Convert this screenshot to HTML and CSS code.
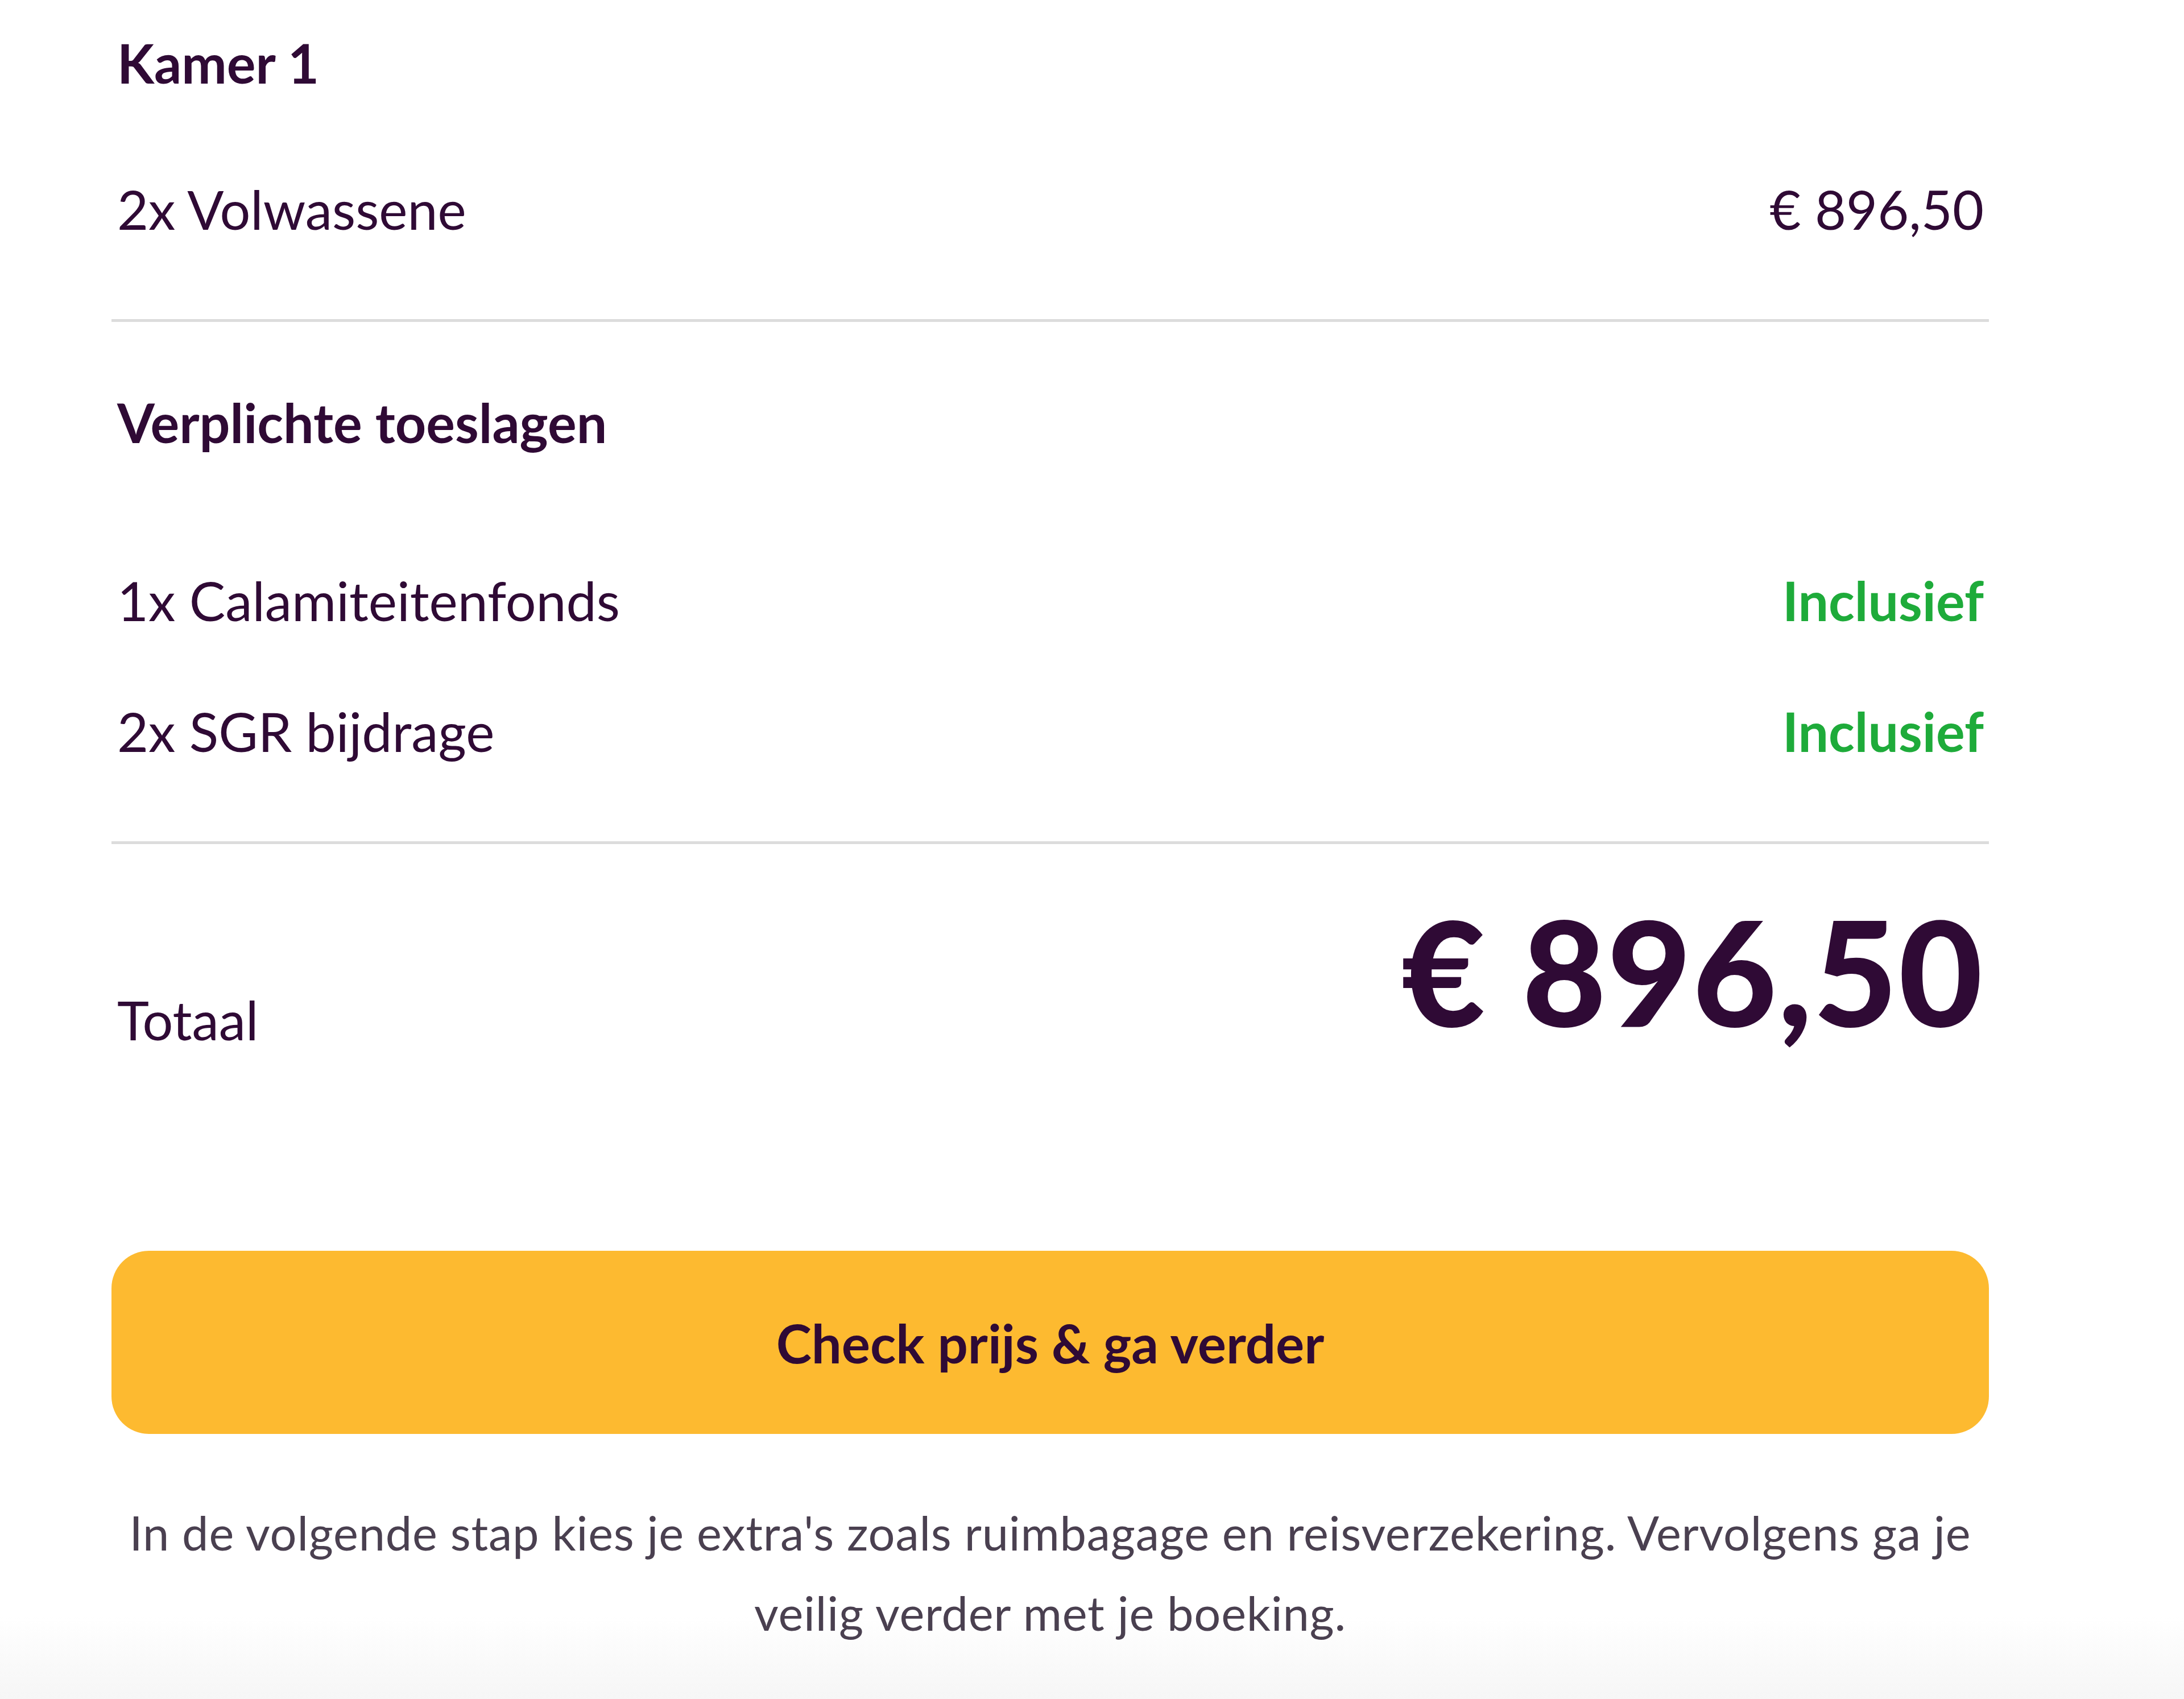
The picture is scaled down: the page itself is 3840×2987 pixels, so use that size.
FILE: index.html
```html
<!DOCTYPE html>
<html lang="nl">
<head>
<meta charset="utf-8">
<title>Prijsoverzicht</title>
<link rel="stylesheet" href="styles.css">
</head>
<body>
<main class="summary">
  <section class="room">
    <h2 class="heading heading-room">Kamer 1</h2>
    <div class="row row-adults">
      <span class="label">2x Volwassene</span>
      <span class="value">€ 896,50</span>
    </div>
  </section>
  <hr class="divider">
  <section class="surcharges">
    <h2 class="heading heading-surcharges">Verplichte toeslagen</h2>
    <div class="row row-first">
      <span class="label">1x Calamiteitenfonds</span>
      <span class="value included">Inclusief</span>
    </div>
    <div class="row row-next">
      <span class="label">2x SGR bijdrage</span>
      <span class="value included">Inclusief</span>
    </div>
  </section>
  <hr class="divider divider-second">
  <div class="total">
    <span class="total-label">Totaal</span>
    <span class="total-amount">€ 896,50</span>
  </div>
  <button class="cta" type="button">Check prijs &amp; ga verder</button>
  <p class="note">In de volgende stap kies je extra's zoals ruimbagage en reisverzekering. Vervolgens ga je veilig verder met je boeking.</p>
</main>
</body>
</html>
```

FILE: styles.css
```css
html, body {
  margin: 0;
  padding: 0;
}

body {
  min-height: 2987px;
  background: linear-gradient(to bottom, #ffffff 0, #ffffff 2840px, #f6f6f6 2987px);
  font-family: "Lato", "Liberation Sans", sans-serif;
  color: #2f0a35;
}

.summary {
  width: 3301px;
  margin-left: 196px;
  padding-top: 53px;
  display: flex;
  flex-direction: column;
}

.heading {
  margin: 0;
  font-size: 95px;
  line-height: 114px;
  font-weight: 700;
  padding-left: 10px;
}

.row {
  display: flex;
  justify-content: space-between;
  align-items: baseline;
  font-size: 95px;
  line-height: 114px;
  padding: 0 9px 0 10px;
}

.row-adults {
  margin-top: 143px;
}

.row-first {
  margin-top: 199px;
}

.row-next {
  margin-top: 116px;
}

.included {
  color: #1eab3a;
  font-weight: 700;
}

.divider {
  margin: 137px 0 0;
  border: 0;
  height: 5px;
  background: #dcdcdc;
}

.surcharges {
  margin-top: 119px;
}

.divider-second {
  margin-top: 137px;
}

.total {
  display: flex;
  justify-content: space-between;
  align-items: flex-end;
  margin-top: 69px;
  padding: 0 9px 0 10px;
}

.total-label {
  font-size: 95px;
  line-height: 114px;
  margin-bottom: 10px;
}

.total-amount {
  font-size: 255px;
  line-height: 306px;
  font-weight: 900;
  letter-spacing: 2px;
}

.cta {
  margin-top: 340px;
  height: 322px;
  width: 100%;
  border: 0;
  border-radius: 66px;
  background: #fdba30;
  color: #2f0a35;
  font-family: "Lato", "Liberation Sans", sans-serif;
  font-size: 94px;
  font-weight: 700;
  cursor: pointer;
}

.note {
  margin: 103px 0 0;
  text-align: center;
  font-size: 83px;
  line-height: 141px;
  letter-spacing: 0.8px;
  color: #4a4050;
}
```
